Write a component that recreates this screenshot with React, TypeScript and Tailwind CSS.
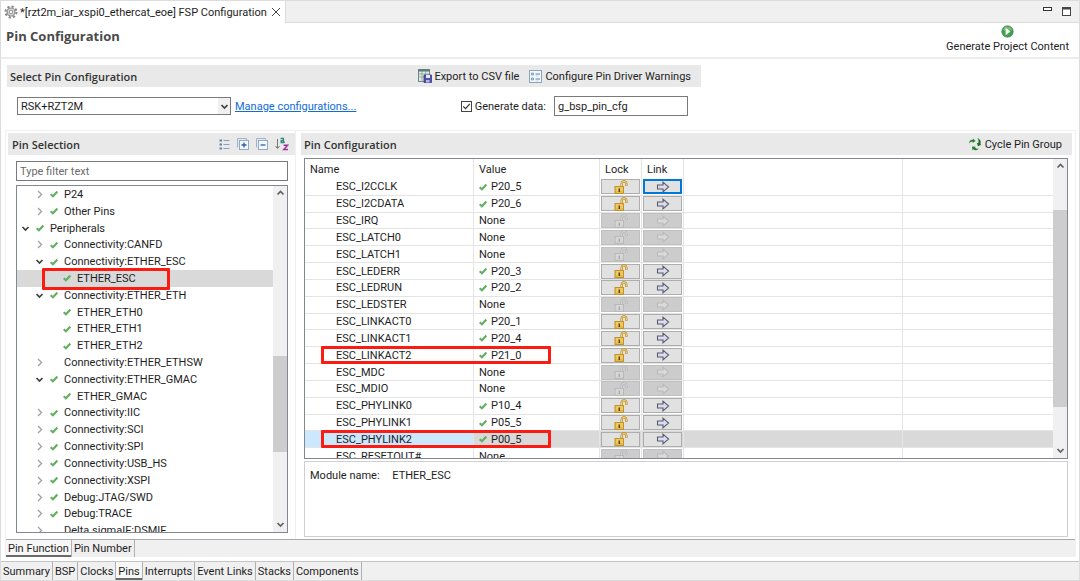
import { useState } from "react";
import type { ReactNode } from "react";
import clsx from "clsx";

type TreeItem = {
  label: string;
  level: 0 | 1 | 2;
  state: "open" | "closed" | "leaf";
  unchecked?: boolean;
  marked?: boolean;
};

const TREE: TreeItem[] = [
  { label: "P24", level: 1, state: "closed" },
  { label: "Other Pins", level: 1, state: "closed" },
  { label: "Peripherals", level: 0, state: "open" },
  { label: "Connectivity:CANFD", level: 1, state: "closed" },
  { label: "Connectivity:ETHER_ESC", level: 1, state: "open" },
  { label: "ETHER_ESC", level: 2, state: "leaf", marked: true },
  { label: "Connectivity:ETHER_ETH", level: 1, state: "open" },
  { label: "ETHER_ETH0", level: 2, state: "leaf" },
  { label: "ETHER_ETH1", level: 2, state: "leaf" },
  { label: "ETHER_ETH2", level: 2, state: "leaf" },
  { label: "Connectivity:ETHER_ETHSW", level: 1, state: "closed", unchecked: true },
  { label: "Connectivity:ETHER_GMAC", level: 1, state: "open" },
  { label: "ETHER_GMAC", level: 2, state: "leaf" },
  { label: "Connectivity:IIC", level: 1, state: "closed" },
  { label: "Connectivity:SCI", level: 1, state: "closed" },
  { label: "Connectivity:SPI", level: 1, state: "closed" },
  { label: "Connectivity:USB_HS", level: 1, state: "closed" },
  { label: "Connectivity:XSPI", level: 1, state: "closed" },
  { label: "Debug:JTAG/SWD", level: 1, state: "closed" },
  { label: "Debug:TRACE", level: 1, state: "closed" },
  { label: "Delta sigmaIF:DSMIF", level: 1, state: "closed", unchecked: true },
];

const INDENT = { 0: "pl-1", 1: "pl-[18px]", 2: "pl-[31px]" };

type Pin = { name: string; value?: string; marked?: boolean };

const PINS: Pin[] = [
  { name: "ESC_I2CCLK", value: "P20_5" },
  { name: "ESC_I2CDATA", value: "P20_6" },
  { name: "ESC_IRQ" },
  { name: "ESC_LATCH0" },
  { name: "ESC_LATCH1" },
  { name: "ESC_LEDERR", value: "P20_3" },
  { name: "ESC_LEDRUN", value: "P20_2" },
  { name: "ESC_LEDSTER" },
  { name: "ESC_LINKACT0", value: "P20_1" },
  { name: "ESC_LINKACT1", value: "P20_4" },
  { name: "ESC_LINKACT2", value: "P21_0", marked: true },
  { name: "ESC_MDC" },
  { name: "ESC_MDIO" },
  { name: "ESC_PHYLINK0", value: "P10_4" },
  { name: "ESC_PHYLINK1", value: "P05_5" },
  { name: "ESC_PHYLINK2", value: "P00_5", marked: true },
  { name: "ESC_RESETOUT#" },
];

const PAGES = ["Summary", "BSP", "Clocks", "Pins", "Interrupts", "Event Links", "Stacks", "Components"];

const COLUMNS = "grid grid-cols-[169px_126px_42px_42px_219px_1fr]";

function Check() {
  return (
    <svg viewBox="0 0 8 8" className="h-2 w-2 shrink-0" aria-hidden="true">
      <path d="M0.6 4.2 2.9 6.2 7.4 1.6" fill="none" stroke="#62ae62" strokeWidth="2.1" />
    </svg>
  );
}

function Chevron({ dir, className }: { dir: "up" | "down" | "right"; className?: string }) {
  const paths = {
    up: "M1.5 5.5 4.5 2.5 7.5 5.5",
    down: "M1.5 3 4.5 6 7.5 3",
    right: "M3 1 6.5 4.5 3 8",
  };
  return (
    <svg viewBox="0 0 9 9" className={clsx("h-[9px] w-[9px] shrink-0", className)} aria-hidden="true">
      <path d={paths[dir]} fill="none" stroke="currentColor" strokeWidth={dir === "right" ? 1.3 : 1.7} />
    </svg>
  );
}

function LockIcon({ off }: { off: boolean }) {
  return (
    <svg viewBox="0 0 14 14" className="h-3.5 w-3.5" aria-hidden="true">
      <path
        d="M7.6 7V3.8a2.4 2.4 0 0 1 4.8 0V6"
        fill="none"
        stroke={off ? "#b4b4b4" : "#b98a1e"}
        strokeWidth="2.2"
      />
      <path d="M7.6 7V3.8a2.4 2.4 0 0 1 4.8 0V5.6" fill="none" stroke={off ? "#d6d6d6" : "#f4d683"} strokeWidth="1" />
      <rect x="1" y="6.5" width="8.5" height="7" fill={off ? "#d2d2d2" : "#e6ba48"} stroke={off ? "#b8b8b8" : "#c2932a"} />
      <path d="M2 8H9M2 10H9" stroke={off ? "#dedede" : "#f6dd92"} strokeWidth="0.8" />
      <path d="M5.3 8.5v3.5" stroke={off ? "#aaa" : "#574010"} strokeWidth="1.4" />
    </svg>
  );
}

function ArrowIcon({ off }: { off: boolean }) {
  return (
    <svg viewBox="0 0 14 12" className="h-3 w-3.5" aria-hidden="true">
      <path
        d="M1.5 4H7V1.2L12.6 6 7 10.8V8H1.5Z"
        fill={off ? "#dadada" : "#d9dcf2"}
        stroke={off ? "#bababa" : "#5a5a68"}
        strokeWidth="1.1"
      />
    </svg>
  );
}

function GearIcon() {
  return (
    <svg viewBox="0 0 14 14" className="h-3.5 w-3.5 shrink-0" aria-hidden="true">
      <circle cx="7" cy="7" r="5.5" fill="none" stroke="#888" strokeWidth="2" strokeDasharray="2.2 2.1" />
      <circle cx="7" cy="7" r="4" fill="#ddd" stroke="#8a8a8a" strokeWidth="1.2" />
      <circle cx="7" cy="7" r="1.8" fill="#fff" stroke="#888" />
    </svg>
  );
}

function ExportIcon() {
  return (
    <svg viewBox="0 0 14 14" className="h-3.5 w-3.5" aria-hidden="true">
      <rect x="0.5" y="0.5" width="11" height="12" fill="#dfe9dc" stroke="#75858c" />
      <path d="M0.5 1.5h11" stroke="#557a78" strokeWidth="2" />
      <path d="M1 5h10M1 8h10M4 2v10M7.5 2v10" stroke="#86a494" strokeWidth="0.8" />
      <path d="M6 6h7.5v7.5H6z" fill="#4f4fae" stroke="#38388c" strokeWidth="0.8" />
      <path d="M8 6h4v3H8z" fill="#e8e8fa" />
      <path d="M8 11h3.5v2.5H8z" fill="#b8b8de" />
    </svg>
  );
}

function WarningsIcon() {
  return (
    <svg viewBox="0 0 13 13" className="h-[13px] w-[13px]" aria-hidden="true">
      <rect x="0.5" y="0.5" width="12" height="12" fill="#f3f8fd" stroke="#8ba3bd" />
      <path d="M2.5 3h2v2h-2zM2.5 8h2v2h-2z" fill="#cfe0ef" stroke="#6c8fb3" strokeWidth="0.8" />
      <path d="M6.5 4h4.5M6.5 9h4.5" stroke="#5d7fa4" />
      <path d="M6.5 6h3M6.5 11h3" stroke="#b9cbdd" strokeWidth="0.8" />
    </svg>
  );
}

function RunIcon() {
  return (
    <svg viewBox="0 0 13 13" className="h-[13px] w-[13px]" aria-hidden="true">
      <circle cx="6.5" cy="6.5" r="5.6" fill="#43a052" stroke="#3c8a52" />
      <path d="M2 5.5a4.6 4.6 0 0 1 9 0" fill="#74bf6b" />
      <path d="M4.6 2.8 9.4 6.5 4.6 10.2Z" fill="#fff" />
    </svg>
  );
}

function CycleIcon() {
  return (
    <svg viewBox="0 0 14 14" className="h-3.5 w-3.5" aria-hidden="true">
      <path d="M1.2 6.6C1 4.2 2.6 2.6 4.8 2.9L5 1.6 7.6 4 4.6 6 4.7 4.7C3.2 4.4 2.2 5 1.2 6.6Z" fill="#2a8338" />
      <path d="M9.4 1.2C12.2 2 13.4 4.4 12.4 7.2L13.4 7.8 10 9.2 8.8 5.8 10.2 6.3C10.9 4.4 10.6 2.8 9.4 1.2Z" fill="#176f22" />
      <path d="M10.8 11.6C9.4 13.5 7 13.8 5.4 12.3L4.4 13.2 4.2 9.4 7.8 9.8 6.9 10.8C8 11.8 9.2 12.1 10.8 11.6Z" fill="#1c7a29" />
    </svg>
  );
}

function ListIcon() {
  return (
    <svg viewBox="0 0 11 11" className="h-[11px] w-[11px]" aria-hidden="true">
      <path d="M0.5 1.5h2.5M0.5 5.5h2.5M0.5 9.5h2.5" stroke="#6b80ae" strokeWidth="2" />
      <path d="M4.5 1.5H10.5M4.5 5.5H10.5M4.5 9.5H10.5" stroke="#8c9dbb" />
    </svg>
  );
}

function BoxIcon({ plus }: { plus?: boolean }) {
  return (
    <svg viewBox="0 0 12 12" className="h-3 w-3" aria-hidden="true">
      <path d="M0.5 9.5v-9h9v2" fill="none" stroke="#9db5cc" />
      <rect x="2.5" y="2.5" width="9" height="9" fill="#f2f8fe" stroke="#8fabc6" />
      <path d={plus ? "M4.5 7H9.5M7 4.5V9.5" : "M4.5 7H9.5"} stroke="#2f5f9e" strokeWidth="1.3" />
    </svg>
  );
}

function SortIcon() {
  return (
    <svg viewBox="0 0 14 14" className="h-3.5 w-3.5" aria-hidden="true">
      <path d="M2.5 2v9M0.5 9l2 2.5 2-2.5" fill="none" stroke="#777" />
      <path d="M5.6 1.5H8.4v4H6.2V3.6H8.4M8.8 5.2h1" fill="none" stroke="#2c8c7e" strokeWidth="1.4" />
      <path d="M8.6 8.2H12.6L8.8 12.4H13" fill="none" stroke="#a03598" strokeWidth="1.5" />
    </svg>
  );
}

function RedBox({ className }: { className: string }) {
  return (
    <span
      className={clsx("pointer-events-none absolute z-10 rounded-[1px] border-[3px] border-[#fb1b10]", className)}
      aria-hidden="true"
    />
  );
}

function Scrollbar({ thumb }: { thumb: string }) {
  return (
    <div className="flex w-3.5 shrink-0 flex-col items-center bg-[#f0f0f0] py-[3px] text-[#606060]" aria-hidden="true">
      <Chevron dir="up" />
      <div className="flex w-full flex-1 flex-col">
        <div className={clsx("w-full bg-[#cdcdcd]", thumb)} />
      </div>
      <Chevron dir="down" />
    </div>
  );
}

function SectionBar({ title, children, className }: { title: string; children?: ReactNode; className?: string }) {
  return (
    <div className={clsx("flex h-[22px] shrink-0 items-center bg-[#e9e9e9]", className)}>
      <h2 className="flex-1 font-['Open_Sans','Noto_Sans',sans-serif] font-semibold text-[#333333]">{title}</h2>
      {children}
    </div>
  );
}

function PinTree() {
  const [selected, setSelected] = useState("ETHER_ESC");

  return (
    <div className="flex min-h-0 flex-1 overflow-hidden border border-[#828790] bg-white">
      <ul className="flex h-[353px] flex-1 flex-col">
        {TREE.map((item) => (
          <li key={item.label} className="relative flex min-h-0 flex-1">
            <button
              type="button"
              onClick={() => setSelected(item.label)}
              className={clsx(
                "flex min-w-0 flex-1 items-center text-left",
                INDENT[item.level],
                selected === item.label && "bg-[#d9d9d9]"
              )}
            >
              {item.state === "leaf" ? (
                <span className="w-[9px]" />
              ) : (
                <Chevron
                  dir={item.state === "open" ? "down" : "right"}
                  className={item.state === "open" ? "text-[#404040]" : "text-[#a0a0a0]"}
                />
              )}
              <span className="mr-1.5 ml-1.5 w-2">{!item.unchecked && <Check />}</span>
              {item.label}
            </button>
            {item.marked && <RedBox className="-top-0.5 left-[25px] h-[22px] w-[128px]" />}
          </li>
        ))}
      </ul>
      <Scrollbar thumb="mt-[158px] h-[96px]" />
    </div>
  );
}

function PinRow({ pin, focused, selected }: { pin: Pin; focused: boolean; selected: boolean }) {
  const off = !pin.value;
  const cell = "flex min-w-0 items-center border-r border-b border-[#e4e4e4]";
  const button = clsx(
    "flex h-[15px] flex-1 items-center justify-center border",
    off ? "border-[#c0c0c0] bg-[#cccccc]" : "border-[#adadad] bg-[#e1e1e1]"
  );

  return (
    <tr className={clsx(COLUMNS, "relative min-h-0 flex-1", selected && "bg-[#d9d9d9]")}>
      <td className={clsx(cell, "pl-[31px]", selected && "bg-[#cce8ff]")}>{pin.name}</td>
      <td className={clsx(cell, "gap-1 pl-[5px]")}>
        {pin.value && <Check />}
        <span>{pin.value ?? "None"}</span>
        {pin.marked && <RedBox className="-top-px left-4 h-[18px] w-[230px]" />}
      </td>
      <td className={clsx(cell, "px-px")}>
        <button type="button" disabled={off} aria-label={`Lock ${pin.name}`} className={button}>
          <LockIcon off={off} />
        </button>
      </td>
      <td className={clsx(cell, "px-px")}>
        <button
          type="button"
          disabled={off}
          aria-label={`Link ${pin.name}`}
          className={clsx(button, focused && "outline-2 -outline-offset-2 outline-[#0078d7]")}
        >
          <ArrowIcon off={off} />
        </button>
      </td>
      <td className={cell} />
      <td className="border-b border-[#e4e4e4]" />
    </tr>
  );
}

function PinTable() {
  const head = "flex items-center border-r border-[#e4e4e4] pl-[5px] font-normal";

  return (
    <div className="flex min-h-0 flex-1 overflow-hidden border border-[#828790] bg-white">
      <table className="flex h-[306px] flex-1 flex-col">
        <thead>
          <tr className={clsx(COLUMNS, "h-5")}>
            <th scope="col" className={head}>Name</th>
            <th scope="col" className={head}>Value</th>
            <th scope="col" className={head}>Lock</th>
            <th scope="col" className={head}>Link</th>
            <td className={head} />
            <td />
          </tr>
        </thead>
        <tbody className="flex min-h-0 flex-1 flex-col">
          {PINS.map((pin, i) => (
            <PinRow key={pin.name} pin={pin} focused={i === 0} selected={pin.name === "ESC_PHYLINK2"} />
          ))}
        </tbody>
      </table>
      <Scrollbar thumb="mt-[39px] h-[197px]" />
    </div>
  );
}

export default function App() {
  const [generate, setGenerate] = useState(true);
  const [page, setPage] = useState("Pins");

  return (
    <div className="flex h-screen flex-col border border-[#dcdcdc] bg-white font-[Roboto,'Noto_Sans',sans-serif] text-[11px] leading-[15px] text-[#1e1e1e]">
      {/* Editor tab */}
      <div className="flex h-[22px] shrink-0 bg-[#f0f0f0]">
        <div className="flex items-center gap-0.5 border-r border-[#dcdcdc] bg-white pr-1 pl-[3px]">
          <GearIcon />
          <span>*[rzt2m_iar_xspi0_ethercat_eoe] FSP Configuration</span>
          <button type="button" aria-label="Close" className="ml-0.5">
            <svg viewBox="0 0 10 10" className="h-2.5 w-2.5" aria-hidden="true">
              <path d="M1 1 9 9M9 1 1 9" stroke="#444" />
            </svg>
          </button>
        </div>
        <div className="flex flex-1 items-center justify-end gap-2.5 border-b border-[#dcdcdc] pr-2">
          <button type="button" aria-label="Minimize">
            <svg viewBox="0 0 9 9" className="h-[9px] w-[9px]" aria-hidden="true">
              <rect x="0.5" y="0.5" width="8" height="3" fill="#fff" stroke="#333" />
            </svg>
          </button>
          <button type="button" aria-label="Maximize">
            <svg viewBox="0 0 9 9" className="h-[9px] w-[9px]" aria-hidden="true">
              <rect x="0.5" y="0.5" width="8" height="8" fill="#fff" stroke="#444" />
              <path d="M0 1.5h9" stroke="#444" strokeWidth="2" />
            </svg>
          </button>
        </div>
      </div>

      {/* Form title */}
      <header className="flex h-9 shrink-0 items-start justify-between border-b-2 border-[#ececec] pr-2.5 pl-[5px]">
        <h1 className="pt-1.5 font-['Open_Sans','Noto_Sans',sans-serif] text-[13px] font-bold text-[#4a4a4a]">
          Pin Configuration
        </h1>
        <button type="button" className="flex flex-col items-center gap-px pt-0.5">
          <RunIcon />
          Generate Project Content
        </button>
      </header>

      {/* Configuration selection */}
      <section className="flex h-[71px] w-[700px] shrink-0 flex-col pt-1.5 pl-1.5">
        <SectionBar title="Select Pin Configuration" className="pr-2.5 pl-[3px]">
          <button type="button" className="flex items-center gap-0.5">
            <ExportIcon />
            Export to CSV file
          </button>
          <button type="button" className="ml-2.5 flex items-center gap-[3px]">
            <WarningsIcon />
            Configure Pin Driver Warnings
          </button>
        </SectionBar>
        <div className="mt-[9px] flex h-5 items-center pr-[13px] pl-2.5">
          <div className="relative">
            <select
              aria-label="Pin configuration"
              className="block h-[18px] w-[214px] appearance-none border border-[#7a7a7a] bg-white pl-[3px] outline-none"
            >
              <option>RSK+RZT2M</option>
            </select>
            <span className="pointer-events-none absolute inset-y-px right-px flex w-3 items-center justify-center bg-[#f0f0f0] text-[#404040]">
              <Chevron dir="down" />
            </span>
          </div>
          <a href="#manage" className="ml-1 text-[#0f6bd6] underline">
            Manage configurations...
          </a>
          <label className="ml-auto flex items-center gap-[3px]">
            <input
              type="checkbox"
              checked={generate}
              onChange={(e) => setGenerate(e.target.checked)}
              className="peer sr-only"
            />
            <svg viewBox="0 0 11 11" className="h-[11px] w-[11px]" aria-hidden="true">
              <rect x="0.5" y="0.5" width="10" height="10" fill="#fff" stroke="#444" />
              {generate && <path d="M2.2 5.4 4.5 7.7 8.8 2.9" fill="none" stroke="#333" strokeWidth="1.2" />}
            </svg>
            Generate data:
          </label>
          <input
            aria-label="Data name"
            defaultValue="g_bsp_pin_cfg"
            className="ml-2 h-5 w-[134px] border border-[#7a7a7a] bg-white px-[3px] outline-none"
          />
        </div>
      </section>

      <main className="mr-[3px] ml-1 flex min-h-0 flex-1 flex-col border-x border-t border-[#f0f0f0]">
        <div className="flex min-h-0 flex-1 gap-[5px] pr-[3px] pl-0.5">
          {/* Pin selection */}
          <section className="flex w-[288px] shrink-0 flex-col border-r border-[#f0f0f0] pt-0.5 pb-1.5">
            <SectionBar title="Pin Selection" className="pr-1.5 pl-1">
              <div className="flex items-center gap-[7px]">
                <button type="button" aria-label="List"><ListIcon /></button>
                <button type="button" aria-label="Expand all"><BoxIcon plus /></button>
                <button type="button" aria-label="Collapse all"><BoxIcon /></button>
                <button type="button" aria-label="Sort"><SortIcon /></button>
              </div>
            </SectionBar>
            <div className="flex min-h-0 flex-1 flex-col gap-1 pt-1.5 pr-[7px] pl-2">
              <input
                aria-label="Filter pins"
                placeholder="Type filter text"
                className="h-5 shrink-0 border border-[#7a7a7a] bg-white px-[3px] outline-none placeholder:text-[#6a6a6a]"
              />
              <PinTree />
            </div>
          </section>

          {/* Pin table */}
          <section className="flex min-w-0 flex-1 flex-col pt-0.5">
            <SectionBar title="Pin Configuration" className="pr-2.5 pl-[3px]">
              <button type="button" className="flex items-center gap-[3px]">
                <CycleIcon />
                Cycle Pin Group
              </button>
            </SectionBar>
            <div className="flex min-h-0 flex-1 flex-col gap-0.5 pt-[3px] pr-1 pb-0.5 pl-[3px]">
              <PinTable />
              <div className="h-[76px] shrink-0 border border-[#cfcfcf] px-[5px] pt-1.5">
                Module name: <span className="ml-2.5">ETHER_ESC</span>
              </div>
            </div>
          </section>
        </div>

        <nav aria-label="Pin views" className="flex h-[18px] shrink-0 border-t border-[#a8a8a8] bg-[#f0f0f0]">
          <button type="button" className="bg-[#f7f7f7] px-0.5 shadow-[inset_0_-2px_0_#6a6a6a]">
            Pin Function
          </button>
          <button type="button" className="border-x border-[#b0b0b0] px-0.5">
            Pin Number
          </button>
        </nav>
      </main>

      <nav aria-label="Editor pages" className="mt-1 flex h-[19px] shrink-0 border-t border-[#c4c4c4] bg-[#f0f0f0]">
        {PAGES.map((name) => (
          <button
            key={name}
            type="button"
            onClick={() => setPage(name)}
            className={clsx(
              "border-r border-[#b0b0b0] px-0.5",
              page === name && "bg-[#f7f7f7] shadow-[inset_0_-2px_0_#6a6a6a]"
            )}
          >
            {name}
          </button>
        ))}
      </nav>
    </div>
  );
}
